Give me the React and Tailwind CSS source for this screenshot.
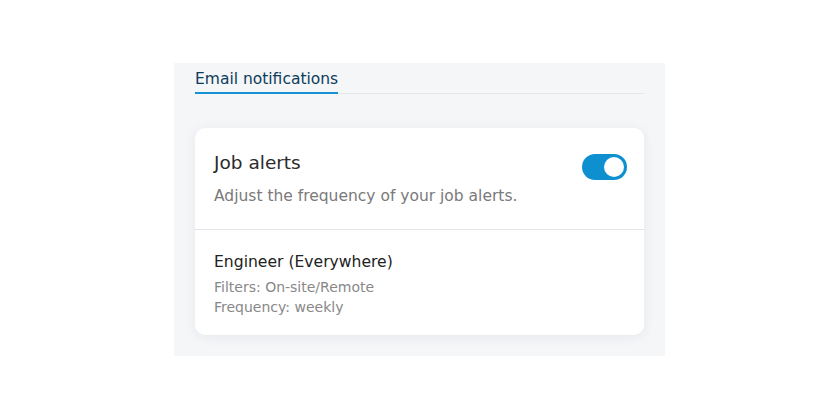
import React from 'react';

export default function App() {
  return (
    <div className="w-[840px] h-[420px] bg-white pt-[63px] pl-[174px]" style={{ fontFamily: '"DejaVu Sans", sans-serif' }}>
      <div className="w-[491px] h-[293px] bg-[#f5f6f8] px-[21px]">
        {/* Tabs */}
        <div className="flex border-b border-[#e3e6ea] pt-[5px]">
          <div className="text-[15.5px] text-[#0b3d5c] pb-[2px] border-b-2 border-[#1593d3] mb-[-1px] leading-[22px]">
            Email notifications
          </div>
        </div>

        {/* Card */}
        <div className="mt-[34px] bg-white rounded-[10px] shadow-[0_2px_12px_rgba(20,40,70,0.07)]">
          <div className="flex justify-between pl-[19px] pr-[17px] pt-[23px] pb-[22px] border-b border-[#e2e4e7]">
            <div>
              <div className="text-[18.5px] text-[#2b2b2b] leading-[24px]">Job alerts</div>
              <div className="mt-[10px] text-[15.5px] text-[#7a7a7a] leading-[22px]">Adjust the frequency of your job alerts.</div>
            </div>
            <div className="mt-[3px] w-[45px] h-[26px] rounded-full bg-[#0d8fd0] flex items-center justify-end pr-[3px]">
              <div className="w-[20px] h-[20px] rounded-full bg-white" />
            </div>
          </div>
          <div className="px-[19px] pt-[21px] pb-[18px]">
            <div className="text-[15.6px] text-[#222] leading-[22px]">Engineer (Everywhere)</div>
            <div className="mt-[4px] text-[14px] text-[#888] leading-[20px]">Filters: On-site/Remote</div>
            <div className="text-[14px] text-[#888] leading-[20px]">Frequency: weekly</div>
          </div>
        </div>
      </div>
    </div>
  );
}
